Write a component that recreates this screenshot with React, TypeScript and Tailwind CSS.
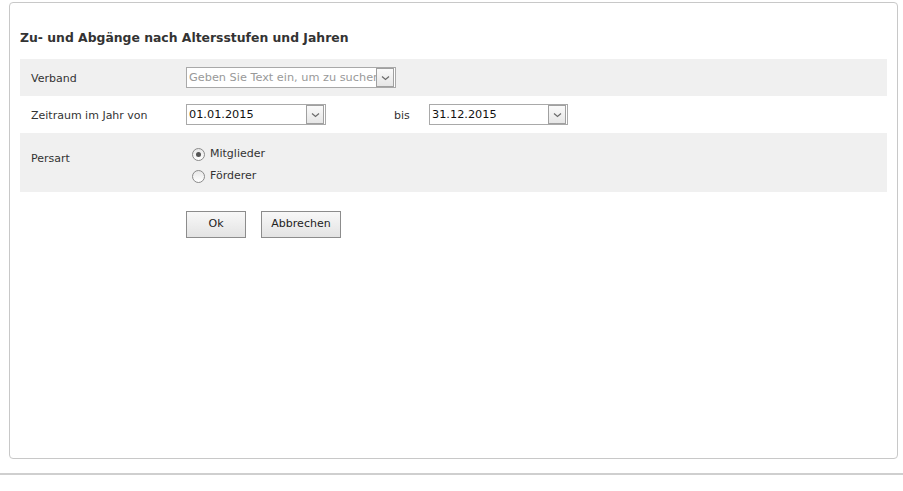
import React from "react";

const Arrow = () => (
  <span className="flex h-[19px] w-[18px] items-center justify-center border border-[#a0a0a0] bg-gradient-to-b from-[#fafafa] to-[#e6e6e6]">
    <svg width="9" height="6" viewBox="0 0 9 6">
      <path d="M1 1.5 L4.5 4.5 L8 1.5" fill="none" stroke="#6b6b6b" strokeWidth="1.2" />
    </svg>
  </span>
);

const Radio = ({ checked }: { checked?: boolean }) => (
  <span className="flex h-[13px] w-[13px] items-center justify-center rounded-full border border-[#8a8a8a] bg-gradient-to-b from-[#e8e8e8] to-[#ffffff]">
    {checked && <span className="h-[5px] w-[5px] rounded-full bg-[#555]" />}
  </span>
);

export default function App() {
  return (
    <div
      className="h-[491px] w-[903px] bg-white text-[11px] text-[#333]"
      style={{ fontFamily: '"DejaVu Sans", sans-serif' }}
    >
      <div className="pl-[9px] pr-[5px] pt-[2px]">
        <div className="h-[457px] rounded-[4px] border border-[#c8c8c8] px-[10px]">
          <div className="pt-[25px] pb-[11px] text-[12.4px] font-bold text-[#333] leading-[20px]">
            Zu- und Abgänge nach Altersstufen und Jahren
          </div>
          <div className="flex h-[37px] items-center bg-[#f0f0f0]">
            <div className="w-[166px] pl-[11px] pt-[3px]">Verband</div>
            <div className="flex h-[21px] w-[210px] items-center border border-[#a9a9a9] bg-white pr-[1px]">
              <span className="flex-1 overflow-hidden whitespace-nowrap pl-[2px] pt-[1px] text-[11.3px] text-[#999]">
                Geben Sie Text ein, um zu suchen
              </span>
              <Arrow />
            </div>
          </div>
          <div className="flex h-[37px] items-center">
            <div className="w-[166px] pl-[11px] pt-[3px]">Zeitraum im Jahr von</div>
            <div className="flex h-[21px] w-[140px] items-center border border-[#a9a9a9] bg-white pr-[1px]">
              <span className="flex-1 pl-[2px] pt-[1px] text-[11.3px] text-[#111]">01.01.2015</span>
              <Arrow />
            </div>
            <div className="w-[103px] pl-[68px] pt-[3px]">bis</div>
            <div className="flex h-[21px] w-[139px] items-center border border-[#a9a9a9] bg-white pr-[1px]">
              <span className="flex-1 pl-[2px] pt-[1px] text-[11.3px] text-[#111]">31.12.2015</span>
              <Arrow />
            </div>
          </div>
          <div className="flex h-[59px] items-start bg-[#f0f0f0]">
            <div className="w-[166px] pl-[11px] pt-[18px]">Persart</div>
            <div className="flex flex-col gap-[8px] pl-[6px] pt-[14px]">
              <label className="flex items-center gap-[5px] leading-[14px]">
                <Radio checked />
                Mitglieder
              </label>
              <label className="flex items-center gap-[5px] leading-[14px]">
                <Radio />
                Förderer
              </label>
            </div>
          </div>
          <div className="flex gap-[15px] pl-[166px] pt-[19px]">
            <button className="h-[27px] w-[60px] border border-[#8c8c8c] bg-gradient-to-b from-[#f8f8f8] to-[#e3e3e3] text-[11px] text-[#222]">
              Ok
            </button>
            <button className="h-[27px] w-[80px] border border-[#8c8c8c] bg-gradient-to-b from-[#f8f8f8] to-[#e3e3e3] text-[11px] text-[#222]">
              Abbrechen
            </button>
          </div>
        </div>
      </div>
      <div className="mt-[14px] h-[2px] bg-[#cfcfcf]" />
    </div>
  );
}
